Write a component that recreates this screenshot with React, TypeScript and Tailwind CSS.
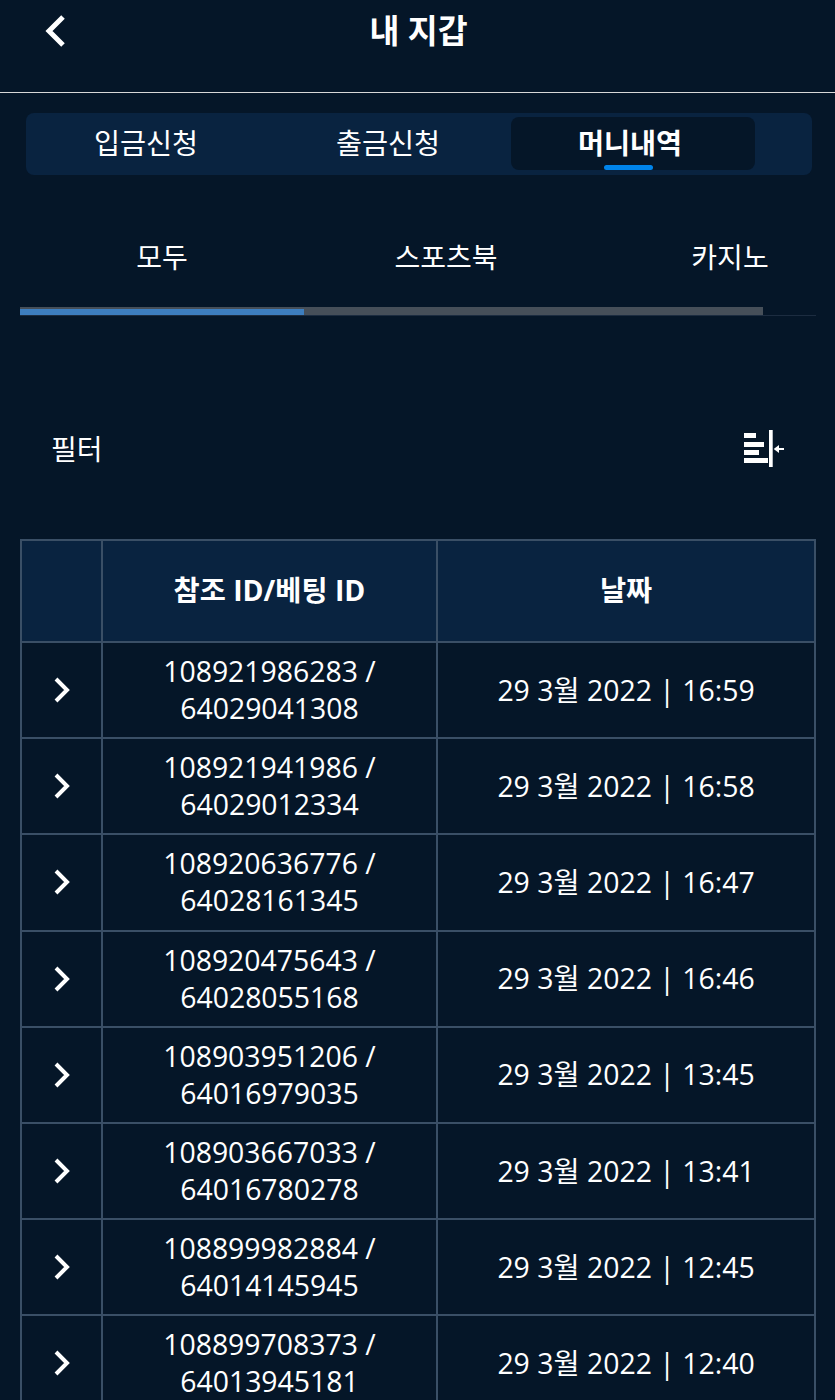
import React from 'react';

const font = "font-['Open_Sans','Noto_Sans_CJK_KR',sans-serif]";

const rows = [
  ['108921986283', '64029041308', '29 3월 2022 | 16:59'],
  ['108921941986', '64029012334', '29 3월 2022 | 16:58'],
  ['108920636776', '64028161345', '29 3월 2022 | 16:47'],
  ['108920475643', '64028055168', '29 3월 2022 | 16:46'],
  ['108903951206', '64016979035', '29 3월 2022 | 13:45'],
  ['108903667033', '64016780278', '29 3월 2022 | 13:41'],
  ['108899982884', '64014145945', '29 3월 2022 | 12:45'],
  ['108899708373', '64013945181', '29 3월 2022 | 12:40'],
];

const BackIcon = () => (
  <svg viewBox="0 0 20 32" className="h-[32px] w-[20px]" fill="none" stroke="white" strokeWidth={5}>
    <path d="M18 2L4 16l14 14" />
  </svg>
);

const RowChevron = () => (
  <svg viewBox="0 0 16 26" className="h-[26px] w-[16px]" fill="none" stroke="white" strokeWidth={4}>
    <path d="M2 2l11 11L2 24" />
  </svg>
);

const FilterIcon = () => (
  <svg viewBox="0 0 40 37" className="h-[37px] w-[40px]" fill="white">
    <rect x="0" y="3" width="12" height="5" />
    <rect x="0" y="12" width="20" height="5" />
    <rect x="0" y="20" width="15" height="5" />
    <rect x="0" y="28" width="24" height="5" />
    <rect x="25" y="0" width="3.7" height="37" />
    <rect x="34" y="18" width="6" height="2" />
    <path d="M29.7 19l5.3-4v8z" />
  </svg>
);

export default function App() {
  return (
    <div className={`${font} h-[1400px] overflow-hidden bg-[#051628] text-white`}>
      <header className="flex h-[93px] border-b border-[#d8d8d8]">
        <div className="flex w-[112px] justify-center pt-[15px] pr-[2px]">
          <BackIcon />
        </div>
        <h1 className="flex-1 pt-[9px] pr-[112px] pl-[2px] text-center text-[32.5px] leading-[44px] font-bold">
          내 지갑
        </h1>
      </header>

      <nav className="mx-[26px] mt-[20px] flex h-[62px] w-[786px] rounded-lg bg-[#092340] pt-[4px] text-[28.3px]">
        <div className="flex h-[53px] w-[242px] items-center justify-center pr-[2px]">입금신청</div>
        <div className="flex h-[53px] w-[243px] items-center justify-center pr-[3px]">출금신청</div>
        <div className="relative flex h-[53px] w-[244px] items-center justify-center rounded-lg bg-[#051628] pr-[6px] font-bold">
          머니내역
          <span className="absolute bottom-0 left-[93px] h-[5px] w-[49px] rounded-sm bg-[#0084ea]" />
        </div>
      </nav>

      <section className="mx-[20px] mt-[62px]">
        <div className="flex overflow-hidden text-[28px] leading-[40px]">
          <div className="w-[284px] shrink-0 text-center">모두</div>
          <div className="w-[284px] shrink-0 text-center">스포츠북</div>
          <div className="w-[284px] shrink-0 text-center">카지노</div>
        </div>
        <div className="mt-[30px] flex h-[9px] w-[796px] items-end border-b border-[#1c2c40]">
          <div className="flex h-[8px] w-[743px] bg-[#464f59]">
            <div className="mt-[2px] h-[6px] w-[284px] bg-[#3d7ebf]" />
          </div>
        </div>
      </section>

      <div className="mt-[110px] flex h-[44px] items-center justify-between px-[51px]">
        <span className="mt-[2px] text-[28px] leading-[44px]">필터</span>
        <FilterIcon />
      </div>

      <table className="mt-[69px] ml-[20px] w-[796px] table-fixed border-collapse">
        <colgroup>
          <col className="w-[81px]" />
          <col className="w-[335px]" />
          <col />
        </colgroup>
        <thead>
          <tr className="h-[102px] bg-[#092340] text-[28.4px] font-bold">
            <th className="border-2 border-[#3a4f66]" />
            <th className="border-2 border-[#3a4f66] pb-[2px] font-bold">참조 ID/베팅 ID</th>
            <th className="border-2 border-[#3a4f66] pb-[2px] font-bold">날짜</th>
          </tr>
        </thead>
        <tbody className="text-[28.4px] leading-[37px]">
          {rows.map((r) => (
            <tr key={r[0]} className="h-[96.2px]">
              <td className="border-2 border-[#3a4f66]">
                <div className="flex justify-center">
                  <RowChevron />
                </div>
              </td>
              <td className="border-2 border-[#3a4f66] text-center">
                {r[0]} /<br />
                {r[1]}
              </td>
              <td className="border-2 border-[#3a4f66] text-center">{r[2]}</td>
            </tr>
          ))}
        </tbody>
      </table>
    </div>
  );
}
